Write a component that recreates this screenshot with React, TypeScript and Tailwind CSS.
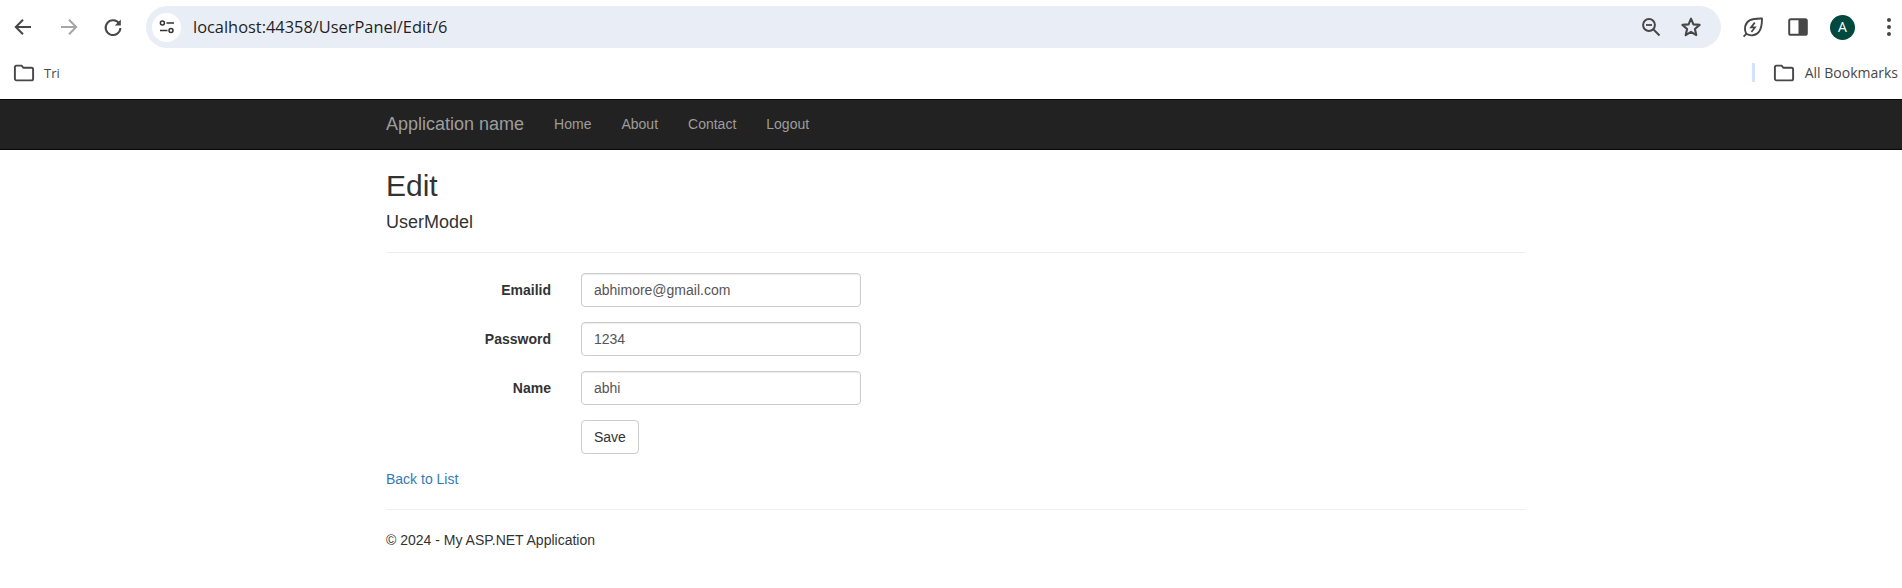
import React from "react";

const Ic = ({ w = 24, h = 24, vb = "0 0 24 24", c = "", children }: any) => (
  <svg width={w} height={h} viewBox={vb} className={`block shrink-0 ${c}`} fill="none">{children}</svg>
);

const Folder = () => (
  <Ic w={22} h={18} vb="0 0 22 18">
    <path d="M1.9 3.2c0-.9.7-1.6 1.6-1.6h5l2 2.2h8c.9 0 1.6.7 1.6 1.6v9.4c0 .9-.7 1.6-1.6 1.6h-15c-.9 0-1.6-.7-1.6-1.6z" stroke="#474747" strokeWidth="1.9" strokeLinejoin="round" />
  </Ic>
);

const Field = ({ label, value }: { label: string; value: string }) => (
  <div className="flex mb-[15px]">
    <label className="w-[165px] mr-[30px] pt-[7px] text-right font-bold text-[14px] leading-[20px] text-[#333]">{label}</label>
    <input readOnly value={value} className="w-[280px] h-[34px] px-3 py-[6px] border border-[#ccc] rounded-[4px] bg-white text-[14px] leading-[20px] text-[#555] shadow-[inset_0_1px_1px_rgba(0,0,0,0.075)] outline-none" />
  </div>
);

export default function App() {
  return (
    <div className="min-h-[588px] bg-white font-['Liberation_Sans',Arial,sans-serif] text-[14px] leading-[20px] text-[#333]">
      <div className="h-[54px] flex items-start pt-[6px] font-['Open_Sans','Noto_Sans',sans-serif]">
        <div className="h-[42px] flex items-center pl-[11px]">
          <Ic c="mr-[22px]"><path d="M20 12H5.5M12 4.8 4.8 12l7.2 7.2" stroke="#474747" strokeWidth="2" /></Ic>
          <Ic c="mr-[20px]"><path d="M4 12h14.5M12 4.8l7.2 7.2-7.2 7.2" stroke="#a6a6a6" strokeWidth="2" /></Ic>
          <Ic c="mr-[21px]"><path d="M18.2 8.6A7.4 7.4 0 1 0 19.4 13" stroke="#474747" strokeWidth="2" /><path d="M19.8 4.5v6h-6z" fill="#474747" /></Ic>
        </div>
        <div className="w-[1575px] h-[42px] rounded-full bg-[#e9eef6] flex items-center pl-[6px] pr-[18px]">
          <div className="w-[29px] h-[29px] rounded-full bg-white flex items-center justify-center mr-[12px]">
            <Ic w={16} h={14} vb="0 0 16 14">
              <circle cx="3.4" cy="3" r="2" stroke="#333" strokeWidth="1.5" />
              <path d="M7.5 3H15M1 10.5h7.5" stroke="#333" strokeWidth="1.7" />
              <circle cx="12" cy="10.5" r="2" stroke="#333" strokeWidth="1.5" />
            </Ic>
          </div>
          <span className="text-[16.4px] text-[#1f1f1f] flex-1">localhost:44358/UserPanel/Edit/6</span>
          <Ic c="mr-[16px]">
            <circle cx="10" cy="10" r="5.9" stroke="#474747" strokeWidth="2" />
            <path d="m14.5 14.5 6 6" stroke="#474747" strokeWidth="2" />
            <path d="M7 10h6" stroke="#474747" strokeWidth="1.8" />
          </Ic>
          <Ic>
            <path d="M12 3.6l2.4 5.8 6.2.5-4.7 4.1 1.4 6.1L12 16.9l-5.3 3.2 1.4-6.1-4.7-4.1 6.2-.5z" stroke="#474747" strokeWidth="2.1" strokeLinejoin="round" />
          </Ic>
        </div>
        <div className="h-[42px] flex items-center pl-[20px]">
          <Ic c="mr-[21px]">
            <path d="M5.2 18.8C2.8 14.4 3.6 8 9 5.2c3.4-1.7 7.8-1.8 12-1.7 0 4.4-.4 9.6-3 13.3-3 4.2-9 4.4-12.8 2z" stroke="#474747" strokeWidth="1.9" strokeLinejoin="round" />
            <path d="M13.8 7.6 10 12.4h4l-3.6 4.6" stroke="#474747" strokeWidth="1.7" />
            <path d="M2.6 21.6l3-3" stroke="#474747" strokeWidth="1.9" />
          </Ic>
          <Ic c="mr-[20px]">
            <rect x="3.2" y="4.2" width="17.6" height="15.6" rx="1.6" stroke="#474747" strokeWidth="2" />
            <rect x="12.5" y="4" width="8.5" height="16" rx="1" fill="#474747" />
          </Ic>
          <div className="w-[25px] h-[25px] rounded-full bg-[#00493e] text-white text-[14px] flex items-center justify-center mr-[31px]">A</div>
          <Ic w={6} h={20} vb="0 0 6 20">
            <circle cx="3" cy="3" r="2" fill="#474747" />
            <circle cx="3" cy="10" r="2" fill="#474747" />
            <circle cx="3" cy="17" r="2" fill="#474747" />
          </Ic>
        </div>
      </div>

      <div className="h-[45px] pb-[8px] flex items-center font-['Open_Sans','Noto_Sans',sans-serif] text-[14px] text-[#474747]">
        <div className="ml-[13px] mr-[9px]"><Folder /></div>
        <span className="text-[13px]">Tri</span>
        <div className="ml-auto w-[3px] h-[19px] bg-[#d3e3fd] mr-[18px]" />
        <div className="mr-[10px]"><Folder /></div>
        <span className="mr-[4px]">All Bookmarks</span>
      </div>

      <nav className="h-[51px] pb-[2px] bg-[#222] border-y border-[#080808] flex items-center pl-[386px] text-[#9d9d9d]">
        <a className="text-[18px] leading-[20px] mr-[15px]">Application name</a>
        {["Home", "About", "Contact", "Logout"].map((t) => (
          <a key={t} className="px-[15px]">{t}</a>
        ))}
      </nav>

      <main className="ml-[371px] w-[1170px] px-[15px]">
        <h2 className="mt-[19px] mb-[10px] text-[30px] leading-[33px] font-medium">Edit</h2>
        <h4 className="mt-[8px] mb-[12px] text-[18px] leading-[20px] font-medium">UserModel</h4>
        <hr className="my-[20px] border-t border-[#eee]" />
        <form>
          <Field label="Emailid" value="abhimore@gmail.com" />
          <Field label="Password" value="1234" />
          <Field label="Name" value="abhi" />
          <div className="pl-[195px] mb-[15px]">
            <button type="button" className="h-[34px] px-3 border border-[#ccc] rounded-[4px] bg-white text-[#333] text-[14px] leading-[20px]">Save</button>
          </div>
        </form>
        <div><a className="text-[#337ab7]">Back to List</a></div>
        <hr className="my-[20px] border-t border-[#eee]" />
        <footer><p>© 2024 - My ASP.NET Application</p></footer>
      </main>
    </div>
  );
}
